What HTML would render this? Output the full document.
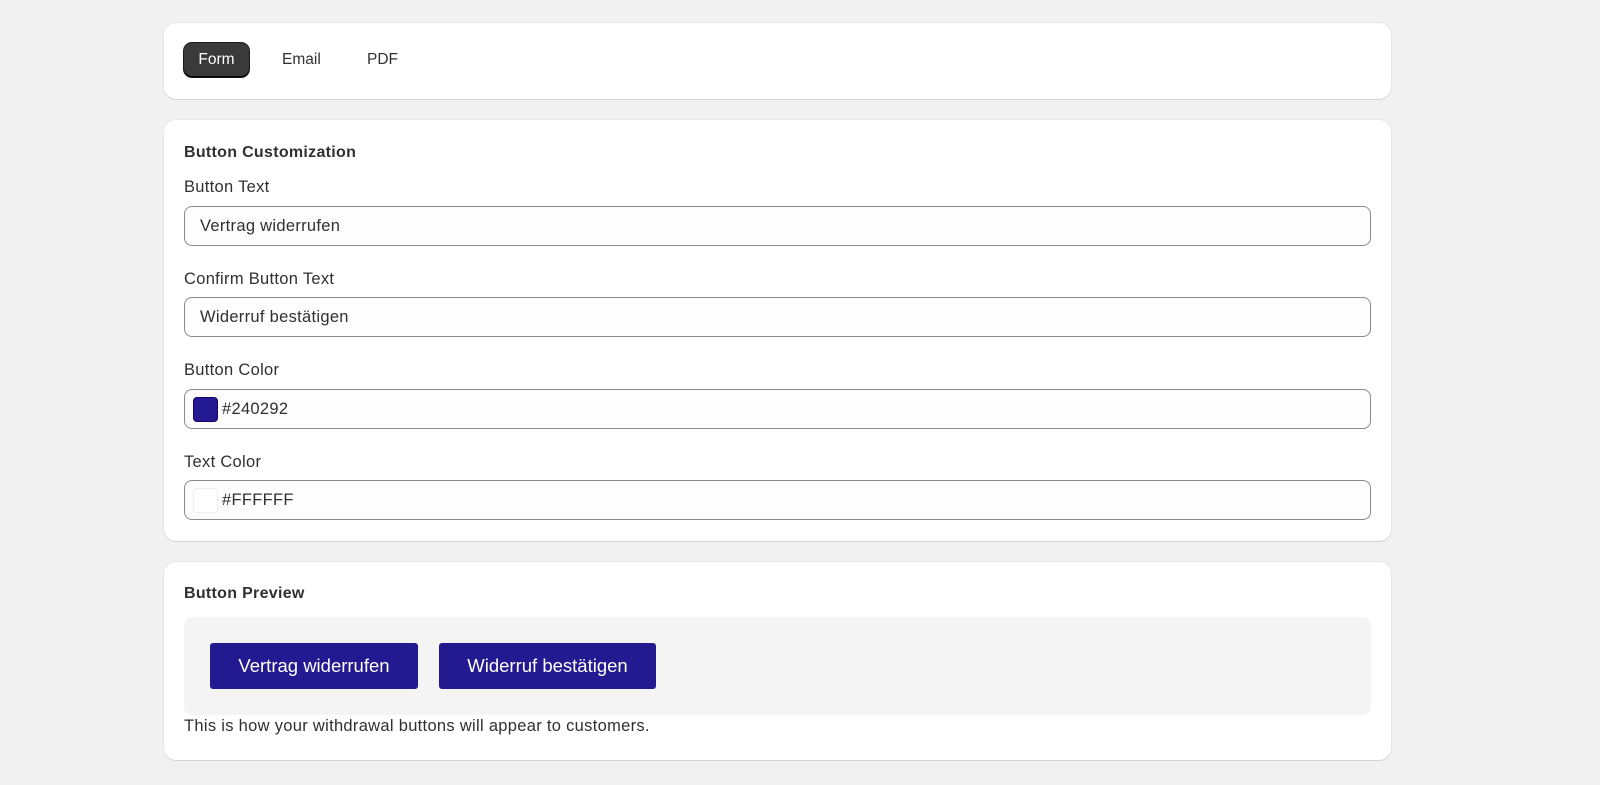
<!DOCTYPE html>
<html><head><style>
body{margin:0;background:#f1f1f1;font-family:"Liberation Sans",sans-serif;color:#303030;width:1600px;height:785px;overflow:hidden;}
.card{position:absolute;left:164px;width:1227px;background:#fff;border-radius:12px;box-shadow:0 1px 0 #d4d4d4,0 0 0 1px #e6e6e6;}
.tab{position:absolute;top:43px;height:34px;line-height:34px;font-size:15.5px;color:#303030;}
.lbl{position:absolute;left:20px;font-size:16.5px;letter-spacing:0.3px;color:#303030;}
.inp{position:absolute;left:20px;width:1185px;height:38px;border:1px solid #8a8a8a;border-radius:8px;background:#fdfdfd;font-size:16.5px;letter-spacing:0.3px;line-height:38px;}
.sw{position:absolute;left:8px;top:7px;width:23px;height:23px;border-radius:4px;}
.btn{position:absolute;top:81px;height:46px;line-height:46px;background:#231a92;color:#fff;font-size:18.5px;border-radius:3px;text-align:center;}
</style></head><body>
<div class="card" style="top:23px;height:76px;">
<div class="tab" style="left:20px;top:20px;width:65px;background:#3a3a3a;color:#fff;border-radius:8px;text-align:center;box-shadow:inset 0 -1px 0 #000,0 0 0 1px #1a1a1a;">Form</div>
<div class="tab" style="left:118px;top:20px;">Email</div>
<div class="tab" style="left:203px;top:20px;">PDF</div>
</div>
<div class="card" style="top:120px;height:421px;">
<div class="lbl" style="top:24px;font-weight:bold;font-size:16px;">Button Customization</div>
<div class="lbl" style="top:58px;">Button Text</div>
<div class="inp" style="top:86px;"><span style="margin-left:15px">Vertrag widerrufen</span></div>
<div class="lbl" style="top:150px;">Confirm Button Text</div>
<div class="inp" style="top:177px;"><span style="margin-left:15px">Widerruf bestätigen</span></div>
<div class="lbl" style="top:241px;">Button Color</div>
<div class="inp" style="top:269px;"><div class="sw" style="background:#231a92;border:1px solid #1a0070"></div><span style="margin-left:37px">#240292</span></div>
<div class="lbl" style="top:333px;">Text Color</div>
<div class="inp" style="top:360px;"><div class="sw" style="background:#fff;border:1px solid #eee"></div><span style="margin-left:37px">#FFFFFF</span></div>
</div>
<div class="card" style="top:562px;height:198px;">
<div class="lbl" style="top:23px;font-weight:bold;font-size:16px;">Button Preview</div>
<div style="position:absolute;left:20px;top:55px;width:1187px;height:98px;background:#f4f4f4;border-radius:8px;"></div>
<div class="btn" style="left:46px;width:208px;">Vertrag widerrufen</div>
<div class="btn" style="left:275px;width:217px;">Widerruf bestätigen</div>
<div class="lbl" style="top:155px;">This is how your withdrawal buttons will appear to customers.</div>
</div>
</body></html>
